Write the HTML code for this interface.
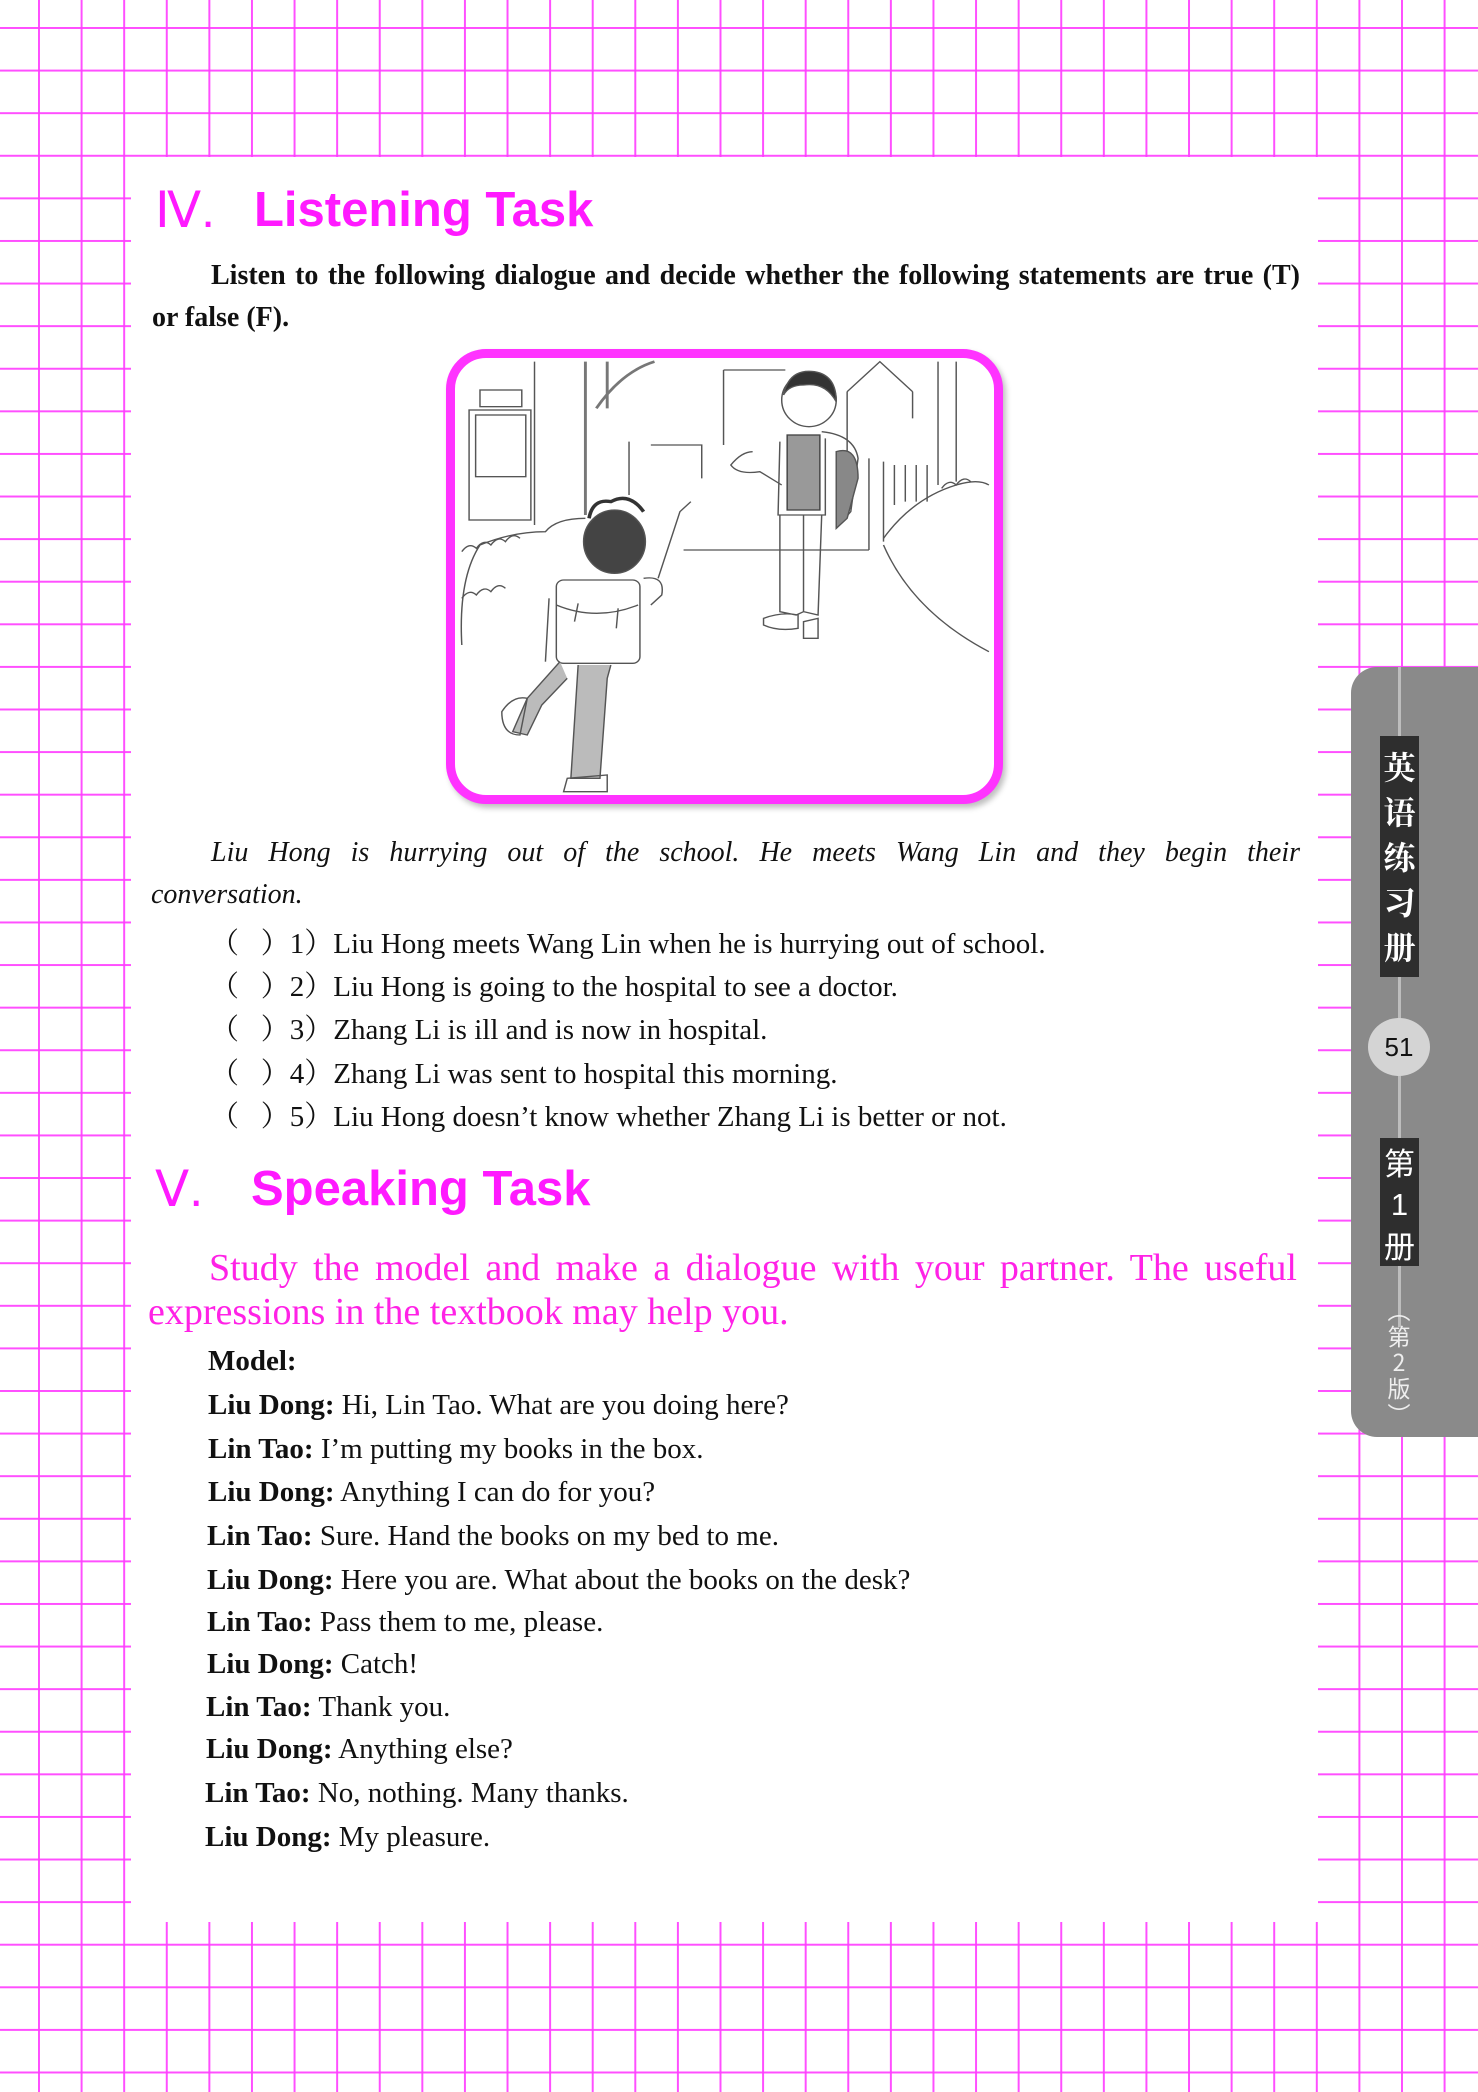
<!DOCTYPE html>
<html><head><meta charset="utf-8"><style>
*{margin:0;padding:0;box-sizing:border-box}
body{width:1478px;height:2092px;position:relative;overflow:hidden;background:#fff;
background-image:
linear-gradient(to right, rgba(255,60,255,0.9) 0, rgba(255,60,255,0.9) 2px, transparent 2px),
linear-gradient(to bottom, rgba(255,60,255,0.9) 0, rgba(255,60,255,0.9) 2px, transparent 2px);
background-size:42.6px 42.6px;background-position:38px 27px;}
.page{position:absolute;left:131px;top:157px;width:1187px;height:1765px;background:#fff}
.a{position:absolute;white-space:nowrap;font-family:"Liberation Serif","Noto Serif CJK SC",serif;font-size:29px;color:#111}
.t{position:absolute;font-family:"Liberation Sans",sans-serif;color:#ff1aff;white-space:nowrap}
.ln{position:absolute;white-space:nowrap;font-family:"Liberation Serif",serif;text-align:justify;text-align-last:justify}
b{font-weight:bold}
.tab{position:absolute;left:1351px;top:667px;width:140px;height:770px;background:#8a8a8a;border-radius:26px 0 0 26px}
.cn{font-family:"Noto Serif CJK SC","Noto Sans CJK SC",serif}
</style></head><body>
<div class="page"></div>

<div class="t" style="left:155px;top:181px;font-size:50px;font-weight:normal">Ⅳ.</div>
<div class="t" style="left:254px;top:182px;font-size:49px;font-weight:bold">Listening Task</div>

<div class="ln" style="left:211px;top:260px;width:1089px;font-size:28px;font-weight:bold;color:#111">Listen to the following dialogue and decide whether the following statements are true (T)</div>
<div class="ln" style="left:152px;top:302px;font-size:28px;font-weight:bold;color:#111;text-align-last:left">or false (F).</div>

<div style="position:absolute;left:446px;top:349px;width:557px;height:455px;border:9px solid #ff33ff;border-radius:40px;background:#fff;box-shadow:3px 4px 6px rgba(0,0,0,0.25)"></div>
<svg style="position:absolute;left:440px;top:345px" width="570" height="465" viewBox="0 0 1568 1395" preserveAspectRatio="none" fill="none" stroke="#555" stroke-width="4">
<rect x="80" y="195" width="170" height="330"/><rect x="98" y="210" width="138" height="185"/>
<rect x="110" y="135" width="115" height="50"/>
<line x1="260" y1="50" x2="260" y2="540"/>
<path d="M400 50 L400 510 M460 50 L460 190 M430 190 Q500 80 590 50" stroke-width="8" stroke="#777"/>
<path d="M780 75 L780 300 M780 75 L950 75 M1120 140 L1210 50 L1300 140 M1120 140 L1120 330 M1300 140 L1300 220 M1370 50 L1370 420 M1420 50 L1420 410"/>
<path d="M580 300 L720 300 L720 400 M520 290 L520 450 M670 615 L1180 615"/>
<path d="M1180 340 L1180 615 M1220 350 L1220 590 M1250 360 L1250 480 M1280 360 L1280 470 M1310 360 L1310 470 M1340 360 L1340 470"/>
<path d="M60 900 Q50 700 110 600 Q200 560 290 560 Q320 520 400 520 M1220 580 Q1300 460 1420 420 Q1480 400 1510 420 M1220 600 Q1300 800 1510 920"/>
<path d="M60 620 q20-30 40-10 q20-30 40-10 q20-30 40-10 q20-30 40-10 M60 760 q20-30 40-10 q20-30 40-10 q20-30 40-10 M1380 430 q20-30 40-10 q20-30 40-10"/>
<ellipse cx="1015" cy="165" rx="75" ry="80" fill="#fff"/>
<path d="M945 150 Q960 70 1030 80 Q1090 90 1090 170 Q1060 110 1000 120 Q960 120 945 150Z" fill="#333"/>
<rect x="955" y="270" width="90" height="225" fill="#999" stroke="#444"/>
<path d="M935 290 L930 510 L1060 510 L1060 280 M1050 260 Q1140 270 1150 340 L1130 500 L1090 550 M935 510 L935 800 L980 810 L1000 800 M1000 510 L1000 800 L1040 810 L1050 510 M890 820 Q940 800 985 810 L985 850 Q930 860 890 840Z M1000 830 L1040 820 L1040 880 L1000 880Z"/>
<path d="M1090 320 Q1150 300 1150 400 L1120 520 L1090 550Z" fill="#888"/>
<path d="M860 320 Q830 320 800 360 Q820 390 880 380 L940 420"/>
<ellipse cx="480" cy="590" rx="85" ry="95" fill="#444"/>
<path d="M410 520 Q420 460 470 470 Q520 440 560 500" stroke="#333" stroke-width="10"/>
<path d="M600 700 L660 500 L690 470 M560 700 Q620 690 610 750 L580 780"/>
<rect x="320" y="705" width="230" height="250" rx="20" fill="#fff"/>
<path d="M320 780 Q430 830 545 780 M380 775 L370 830 M490 790 L485 850"/>
<path d="M300 760 L290 950 M330 950 L240 1060 L200 1160 L240 1170 L280 1080 L350 1000 M380 960 L360 1300 L440 1300 L460 1000 L470 960" fill="#bbb"/>
<path d="M170 1100 Q200 1050 240 1060 L220 1170 Q170 1170 170 1100Z M350 1300 L460 1290 L460 1340 L340 1340Z"/>
</svg>

<div class="ln" style="left:211px;top:837px;width:1089px;font-size:28px;font-style:italic;color:#111">Liu Hong is hurrying out of the school. He meets Wang Lin and they begin their</div>
<div class="ln" style="left:151px;top:879px;font-size:28px;font-style:italic;color:#111;text-align-last:left">conversation.</div>

<div class="a" style="left:210px;top:921px">（&nbsp;&nbsp;&nbsp;）1）Liu Hong meets Wang Lin when he is hurrying out of school.</div>
<div class="a" style="left:210px;top:964px">（&nbsp;&nbsp;&nbsp;）2）Liu Hong is going to the hospital to see a doctor.</div>
<div class="a" style="left:210px;top:1007px">（&nbsp;&nbsp;&nbsp;）3）Zhang Li is ill and is now in hospital.</div>
<div class="a" style="left:210px;top:1051px">（&nbsp;&nbsp;&nbsp;）4）Zhang Li was sent to hospital this morning.</div>
<div class="a" style="left:210px;top:1094px">（&nbsp;&nbsp;&nbsp;）5）Liu Hong doesn’t know whether Zhang Li is better or not.</div>

<div class="t" style="left:155px;top:1160px;font-size:50px">Ⅴ.</div>
<div class="t" style="left:251px;top:1161px;font-size:49px;font-weight:bold">Speaking Task</div>

<div class="ln" style="left:209px;top:1246px;width:1088px;font-size:38px;color:#ff22e6">Study the model and make a dialogue with your partner. The useful</div>
<div class="ln" style="left:148px;top:1290px;font-size:38px;color:#ff22e6;text-align-last:left">expressions in the textbook may help you.</div>

<div class="a" style="left:208px;top:1345px"><b>Model:</b></div>
<div class="a" style="left:208px;top:1389px"><b>Liu Dong:</b> Hi, Lin Tao. What are you doing here?</div>
<div class="a" style="left:208px;top:1433px"><b>Lin Tao:</b> I’m putting my books in the box.</div>
<div class="a" style="left:208px;top:1476px"><b>Liu Dong:</b> Anything I can do for you?</div>
<div class="a" style="left:207px;top:1520px"><b>Lin Tao:</b> Sure. Hand the books on my bed to me.</div>
<div class="a" style="left:207px;top:1564px"><b>Liu Dong:</b> Here you are. What about the books on the desk?</div>
<div class="a" style="left:207px;top:1606px"><b>Lin Tao:</b> Pass them to me, please.</div>
<div class="a" style="left:207px;top:1648px"><b>Liu Dong:</b> Catch!</div>
<div class="a" style="left:206px;top:1691px"><b>Lin Tao:</b> Thank you.</div>
<div class="a" style="left:206px;top:1733px"><b>Liu Dong:</b> Anything else?</div>
<div class="a" style="left:205px;top:1777px"><b>Lin Tao:</b> No, nothing. Many thanks.</div>
<div class="a" style="left:205px;top:1821px"><b>Liu Dong:</b> My pleasure.</div>

<div class="tab"></div>
<div style="position:absolute;left:1398px;top:667px;width:3px;height:660px;background:#bdbdbd"></div>
<div class="cn" style="position:absolute;left:1380px;top:736px;width:39px;height:241px;background:#2e2e2e;color:#fff;font-size:32px;line-height:45px;text-align:center;padding-top:8px;font-weight:bold">英<br>语<br>练<br>习<br>册</div>
<div style="position:absolute;left:1368px;top:1018px;width:62px;height:58px;border-radius:50%;background:#d4d4d4;color:#111;font-family:'Liberation Sans',sans-serif;font-size:26px;line-height:58px;text-align:center">51</div>
<div class="cn" style="position:absolute;left:1380px;top:1138px;width:39px;height:128px;background:#2e2e2e;color:#fff;font-size:31px;line-height:40px;text-align:center;padding-top:4px;font-family:'Noto Sans CJK SC',sans-serif">第<br><span style="font-family:'Liberation Sans'">1</span><br>册</div>
<div style="position:absolute;left:1384px;top:1296px;width:30px;color:#eee;font-family:'Noto Sans CJK SC',sans-serif;font-size:23px;line-height:26px;text-align:center">︵<br>第<br>2<br>版<br>︶</div>
</body></html>
